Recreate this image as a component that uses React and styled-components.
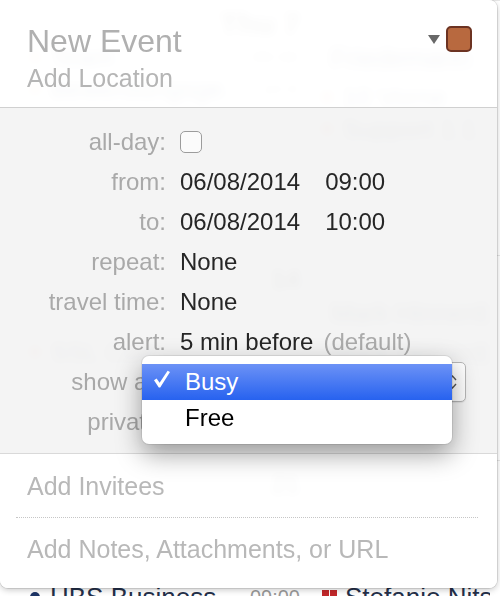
import styled, { createGlobalStyle } from "styled-components";

const GlobalStyle = createGlobalStyle`
  html, body {
    margin: 0;
    padding: 0;
  }
  body {
    width: 500px;
    height: 596px;
    overflow: hidden;
    background: #fff;
    font-family: "Liberation Sans", Arial, Helvetica, sans-serif;
  }
`;

const Screen = styled.div`
  position: relative;
  width: 500px;
  height: 596px;
  overflow: hidden;
  background: #fff;
`;

/* ---------- calendar behind the popover ---------- */

const Calendar = styled.div`
  display: flex;
  flex-direction: column;
  width: 500px;
`;

const Week = styled.div`
  display: grid;
  grid-template-columns: 310px 190px;
  height: ${(p) => p.$h}px;
  border-top: 1px solid #e6e6e6;
  box-sizing: border-box;
`;

const Day = styled.div`
  display: flex;
  flex-direction: column;
  min-width: 0;
  overflow: hidden;
  padding: 6px 10px 0 ${(p) => p.$pl ?? 30}px;
`;

const DayNum = styled.div`
  height: 34px;
  line-height: 34px;
  text-align: right;
  font-size: ${(p) => (p.$small ? 26 : 30)}px;
  font-weight: bold;
  color: #3a3a3a;
`;

const EventList = styled.div`
  display: flex;
  flex-direction: column;
  margin-top: ${(p) => p.$mt ?? 0}px;
`;

const Event = styled.div`
  display: flex;
  align-items: center;
  gap: ${(p) => p.$gap ?? 10}px;
  height: 32px;
  font-size: 26px;
  color: #24304a;
  white-space: nowrap;
  overflow: hidden;
  ${(p) =>
    p.$boxed &&
    `
    border: 1px solid #d8d8d8;
    background: #f3f3f3;
    padding: 0 8px;
    margin-bottom: 6px;
  `}
`;

const Dot = styled.span`
  flex: none;
  width: 10px;
  height: 10px;
  border-radius: 50%;
  background: ${(p) => p.$color};
`;

const Time = styled.span`
  margin-left: auto;
  font-size: 20px;
  color: #9a9a9a;
`;

const CalIcon = styled.span`
  flex: none;
  width: 15px;
  height: 15px;
  background:
    linear-gradient(#fff, #fff) 7px 0 / 1px 100% no-repeat,
    linear-gradient(#fff, #fff) 0 7px / 100% 1px no-repeat,
    #c3282b;
`;

/* ---------- popover ---------- */

const Popover = styled.div`
  position: absolute;
  top: 0;
  left: 0;
  width: 497px;
  height: 588px;
  display: flex;
  flex-direction: column;
  border-radius: 0 8px 8px 8px;
  overflow: hidden;
  backdrop-filter: blur(5px);
  box-shadow: 0 0 0 1px rgba(0, 0, 0, 0.1), 0 2px 6px rgba(0, 0, 0, 0.22);
`;

const Header = styled.div`
  height: 108px;
  box-sizing: border-box;
  display: flex;
  justify-content: space-between;
  align-items: flex-start;
  padding: 23px 25px 0 27px;
  border-bottom: 1px solid #d0d0d0;
  background: rgba(255, 255, 255, 0.965);
`;

const Title = styled.div`
  font-size: 32px;
  line-height: 36px;
  color: #b0b0b0;
`;

const Subtitle = styled.div`
  margin-top: 4px;
  font-size: 25px;
  line-height: 30px;
  color: #b5b5b5;
`;

const ColorPicker = styled.div`
  display: flex;
  align-items: center;
  gap: 6px;
  margin-top: 3px;
`;

const Triangle = styled.span`
  width: 0;
  height: 0;
  border-left: 6.5px solid transparent;
  border-right: 6.5px solid transparent;
  border-top: 9px solid #686868;
`;

const Swatch = styled.span`
  width: 26px;
  height: 26px;
  box-sizing: border-box;
  border: 2px solid #6c3322;
  border-radius: 5px;
  background: #b8693f;
`;

const Form = styled.div`
  position: relative;
  z-index: 2;
  padding: 14px 0 11px;
  border-bottom: 1px solid #d9d9d9;
  background: rgba(244, 244, 244, 0.97);
`;

const Row = styled.div`
  position: relative;
  display: grid;
  grid-template-columns: 166px 1fr;
  column-gap: 14px;
  align-items: center;
  height: 40px;
  font-size: 24px;
`;

const Label = styled.div`
  text-align: right;
  color: #a9a9a9;
  white-space: nowrap;
`;

const Value = styled.div`
  display: flex;
  align-items: center;
  gap: ${(p) => p.$gap ?? 0}px;
  color: #262626;
  white-space: nowrap;
`;

const Muted = styled.span`
  margin-left: 10px;
  color: #ababab;
`;

const Checkbox = styled.span`
  width: 22px;
  height: 22px;
  box-sizing: border-box;
  border: 1px solid #9c9c9c;
  border-radius: 5px;
  background: #fbfbfb;
`;

const Select = styled.div`
  margin-left: -2px;
  width: 288px;
  height: 40px;
  box-sizing: border-box;
  display: flex;
  align-items: center;
  justify-content: flex-end;
  padding-right: 8px;
  border: 1px solid #b7b7b7;
  border-radius: 5px;
  background: #fff;
  box-shadow: 0 1px 1px rgba(0, 0, 0, 0.08);
`;

const Menu = styled.div`
  position: absolute;
  z-index: 5;
  top: -6px;
  left: 142px;
  width: 310px;
  box-sizing: border-box;
  padding: 8px 0;
  border-radius: 7px;
  background: #fff;
  box-shadow: 0 0 0 1px rgba(0, 0, 0, 0.08), 0 10px 26px rgba(0, 0, 0, 0.38);
`;

const MenuItem = styled.div`
  position: relative;
  height: 36px;
  line-height: 36px;
  padding-left: 43px;
  font-size: 24px;
  color: ${(p) => (p.$active ? "#fff" : "#000")};
  background: ${(p) =>
    p.$active ? "linear-gradient(#6c92f6, #2762ef)" : "transparent"};
`;

const CheckMark = styled.svg`
  position: absolute;
  left: 11px;
  top: 6px;
`;

const Footer = styled.div`
  flex: 1;
  padding-top: 17px;
  background: rgba(255, 255, 255, 0.97);
`;

const FooterItem = styled.div`
  padding-left: 27px;
  font-size: 25px;
  line-height: 30px;
  color: #b8b8b8;
`;

const Divider = styled.div`
  margin: 16px 19px 16px 16px;
  border-top: 1px dotted #c6c6c6;
`;

const Arrows = () => (
  <svg width="9" height="16" viewBox="0 0 9 16">
    <path d="M1 6 L4.5 2 L8 6" fill="none" stroke="#555" strokeWidth="1.4" />
    <path d="M1 10 L4.5 14 L8 10" fill="none" stroke="#555" strokeWidth="1.4" />
  </svg>
);

const Check = () => (
  <CheckMark width="18" height="18" viewBox="0 0 18 18">
    <path
      d="M1 10.2 L3.6 8.6 L6.6 12.8 L14.6 0.8 L17 2 L7.2 17.4 L5.8 17.4 Z"
      fill="#fff"
    />
  </CheckMark>
);

export default function App() {
  return (
    <>
      <GlobalStyle />
      <Screen>
        <Calendar>
          <Week $h={255}>
            <Day>
              <DayNum>Thu 7</DayNum>
              <EventList>
                <Event>
                  <Dot $color="#e0906a" />
                  Team
                  <Time>09:00</Time>
                </Event>
                <Event>
                  <Dot $color="#e0906a" />
                  Bewerbungsge…
                  <Time>10:00</Time>
                </Event>
              </EventList>
            </Day>
            <Day $pl={12}>
              <DayNum $small>&nbsp;</DayNum>
              <EventList>
                <Event $boxed>Friedemann</Event>
                <Event>
                  <Dot $color="#e07050" />
                  10 Vorne
                </Event>
                <Event>
                  <Dot $color="#e07050" />
                  Support 1:1
                </Event>
              </EventList>
            </Day>
          </Week>
          <Week $h={205}>
            <Day>
              <DayNum $small>14</DayNum>
              <EventList $mt={40}>
                <Event>
                  <Dot $color="#e07050" />
                  SSL Cert
                </Event>
              </EventList>
            </Day>
            <Day $pl={12}>
              <DayNum $small>&nbsp;</DayNum>
              <EventList>
                <Event $boxed>Mark Hinnenberg</Event>
                <Event $boxed>Mark Hinnenberg</Event>
              </EventList>
            </Day>
          </Week>
          <Week $h={200}>
            <Day>
              <DayNum $small>21</DayNum>
              <EventList $mt={80}>
                <Event>
                  <Dot $color="#1d3566" />
                  HBS Business
                  <Time>09:00</Time>
                </Event>
              </EventList>
            </Day>
            <Day $pl={12}>
              <DayNum $small>&nbsp;</DayNum>
              <EventList $mt={80}>
                <Event $gap={8}>
                  <CalIcon />
                  Stefanie Nitsche
                </Event>
              </EventList>
            </Day>
          </Week>
        </Calendar>

        <Popover>
          <Header>
            <div>
              <Title>New Event</Title>
              <Subtitle>Add Location</Subtitle>
            </div>
            <ColorPicker>
              <Triangle />
              <Swatch />
            </ColorPicker>
          </Header>

          <Form>
            <Row>
              <Label>all-day:</Label>
              <Value>
                <Checkbox />
              </Value>
            </Row>
            <Row>
              <Label>from:</Label>
              <Value $gap={25}>
                <span>06/08/2014</span>
                <span>09:00</span>
              </Value>
            </Row>
            <Row>
              <Label>to:</Label>
              <Value $gap={25}>
                <span>06/08/2014</span>
                <span>10:00</span>
              </Value>
            </Row>
            <Row>
              <Label>repeat:</Label>
              <Value>None</Value>
            </Row>
            <Row>
              <Label>travel time:</Label>
              <Value>None</Value>
            </Row>
            <Row>
              <Label>alert:</Label>
              <Value>
                <span>5 min before</span>
                <Muted>(default)</Muted>
              </Value>
            </Row>
            <Row>
              <Label>show as:</Label>
              <Value>
                <Select>
                  <Arrows />
                </Select>
              </Value>
              <Menu>
                <MenuItem $active>
                  <Check />
                  Busy
                </MenuItem>
                <MenuItem>Free</MenuItem>
              </Menu>
            </Row>
            <Row>
              <Label>private:</Label>
              <Value>
                <Checkbox />
              </Value>
            </Row>
          </Form>

          <Footer>
            <FooterItem>Add Invitees</FooterItem>
            <Divider />
            <FooterItem>Add Notes, Attachments, or URL</FooterItem>
          </Footer>
        </Popover>
      </Screen>
    </>
  );
}
